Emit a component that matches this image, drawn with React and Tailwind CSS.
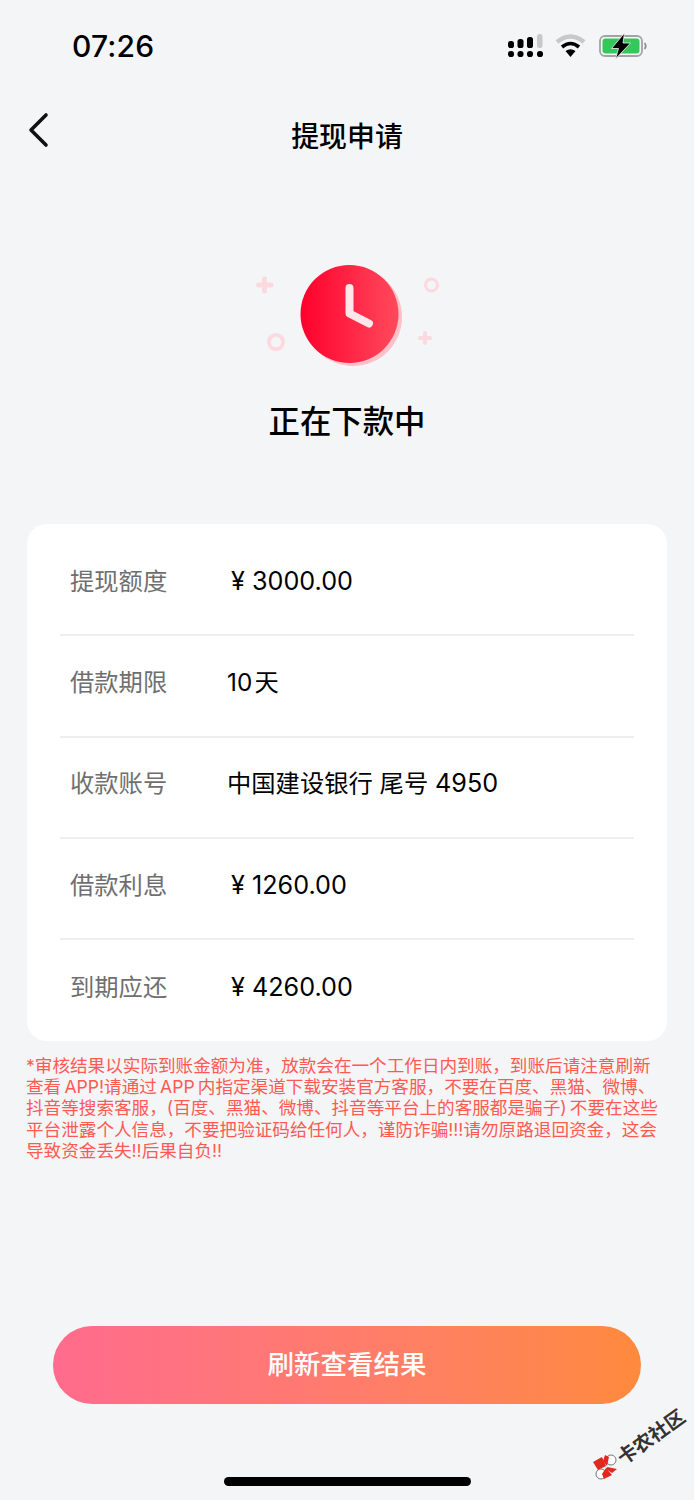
import React from "react";

const rows = [
  { label: "提现额度", value: "¥ 3000.00", money: true },
  { label: "借款期限", value: "10\u200a天" },
  { label: "收款账号", value: "中国建设银行 尾号 ", digits: "4950" },
  { label: "借款利息", value: "¥ 1260.00", money: true },
  { label: "到期应还", value: "¥ 4260.00", money: true },
];

const notice = [
  "*审核结果以实际到账金额为准，放款会在一个工作日内到账，到账后请注意刷新",
  "查看\u2009APP!请通过\u2009APP\u2009内指定渠道下载安装官方客服，不要在百度、黑猫、微博、",
  "抖音等搜索客服，(百度、黑猫、微博、抖音等平台上的客服都是骗子)\u2009不要在这些",
  "平台泄露个人信息，不要把验证码给任何人，谨防诈骗!!!请勿原路退回资金，这会",
  "导致资金丢失!!后果自负!!",
];

function StatusIcons() {
  return (
    <svg width="150" height="30" viewBox="505 31 150 30" className="block">
      {[508, 517.5, 527].map((x, i) => (
        <rect key={x} x={x} y={[41, 39, 37][i]} width="6" height={[7, 9, 11][i]} rx="2.6" fill="#000" />
      ))}
      <rect x="537" y="34" width="5.5" height="14" rx="2.5" fill="#c8c8c8" />
      {[508, 517.5, 527, 537].map((x) => (
        <rect key={x} x={x} y="51" width="6" height="6" rx="2.8" fill="#000" />
      ))}
      <path d="M557 42 Q570.5 31 584 42" fill="none" stroke="#c8c8c8" strokeWidth="4.5" />
      <path d="M562 47 Q570.5 40 579 47" fill="none" stroke="#000" strokeWidth="3.6" />
      <path d="M565.5 51 L570.5 57 L575.5 51 Q570.5 47.5 565.5 51 Z" fill="#000" />
      <rect x="600" y="36" width="42" height="20" rx="5" fill="none" stroke="#a3a3a3" strokeWidth="1.8" />
      <rect x="602.5" y="38.5" width="37" height="15" rx="3" fill="#34c759" />
      <path d="M644.5 43 Q647 46 644.5 49" fill="none" stroke="#8f8f8f" strokeWidth="1.8" />
      <path d="M624.5 33 L611.5 48.5 L618.5 48.5 L615.5 59 L630.5 43 L623 43 Z" fill="#000" stroke="#f4f5f7" strokeWidth="0.8" />
    </svg>
  );
}

function ClockArt() {
  return (
    <svg width="190" height="112" viewBox="252 260 190 112" className="block">
      <defs>
        <linearGradient id="clockFill" x1="0" y1="0" x2="1" y2="0">
          <stop offset="0" stopColor="#ff002d" />
          <stop offset="1" stopColor="#ff4a5c" />
        </linearGradient>
      </defs>
      <path d="M258.5 285 H271 M264.5 279 V291" stroke="#fcd9de" strokeWidth="5" strokeLinecap="round" />
      <path d="M420 338 H430 M425 333 V343" stroke="#fcd9de" strokeWidth="4" strokeLinecap="round" />
      <circle cx="276" cy="342" r="7.2" fill="none" stroke="#fcd9de" strokeWidth="3.8" />
      <circle cx="431.5" cy="285" r="6" fill="none" stroke="#fcd9de" strokeWidth="3" />
      <circle cx="353" cy="317" r="49" fill="#ffc0c8" />
      <circle cx="349.5" cy="314" r="49" fill="url(#clockFill)" />
      <path d="M349.5 288 V313.5 L369 323.5" fill="none" stroke="#ffe6ea" strokeWidth="8" strokeLinecap="round" strokeLinejoin="round" />
    </svg>
  );
}

function Logo() {
  return (
    <svg width="28" height="28" viewBox="0 0 28 28" className="block">
      <circle cx="9" cy="21" r="5" fill="#fff" stroke="#555" strokeWidth="0.8" />
      <circle cx="19" cy="7" r="5" fill="#fff" stroke="#555" strokeWidth="0.8" />
      <path d="M1 9 L10 4 L14 13 L6 17 Z" fill="#e0281e" />
      <path d="M13 2 L17 4 L15 13 L11 8 Z" fill="#e0281e" />
      <path d="M15 14 L25 16 L20 20 L14 16 Z" fill="#e0281e" />
      <path d="M14 15 L20 22 L12 26 L10 21 Z" fill="#e0281e" />
    </svg>
  );
}

export default function App() {
  return (
    <div className="relative h-[1500px] w-[694px] overflow-hidden bg-[#f4f5f7] font-['Inter','Noto_Sans_CJK_SC',sans-serif] text-black">
      <header className="flex h-[92px] items-start justify-between pl-[72px] pr-[39px] pt-[28px]">
        <span className="text-[30px] font-medium leading-[36px] tracking-[0.2px]">07:26</span>
        <div className="pt-[3px]"><StatusIcons /></div>
      </header>

      <nav className="grid h-[72px] grid-cols-[1fr_auto_1fr] items-start">
        <svg width="24" height="36" viewBox="0 0 24 36" className="ml-[27px] mt-[20px] block">
          <path d="M19 3 L4 18 L19 33" fill="none" stroke="#111" strokeWidth="3.6" strokeLinecap="round" strokeLinejoin="round" />
        </svg>
        <h1 className="pt-[27px] text-[27.9px] font-medium leading-[36px]">提现申请</h1>
        <span />
      </nav>

      <section className="flex flex-col items-center pt-[96px]">
        <ClockArt />
        <p className="mt-[28px] text-[31.4px] font-medium leading-[44px]">正在下款中</p>
      </section>

      <section className="mx-[27px] mt-[80px] h-[517px] w-[640px] rounded-[20px] bg-white px-[33px] pt-[11px]">
        {rows.map(({ label, value, money, digits }, i) => (
          <div key={label} className={`flex h-[101.3px] items-center pb-[8px] ${i < 4 ? "border-b-2 border-[#eeeff1]" : ""}`}>
            <span className="ml-[10px] w-[157px] text-[24.3px] leading-[32px] text-[#6f6f6f]">{label}</span>
            <span className={`whitespace-pre leading-[32px] ${money ? "pl-[4px] text-[25.2px]" : "text-[24.3px]"}`}>
              {value}
              {digits && <span className="text-[25.2px]">{digits}</span>}
            </span>
          </div>
        ))}
      </section>

      <div className="ml-[26px] mt-[14px] whitespace-nowrap text-[17.6px] leading-[21.2px] text-[#ff5a52]">
        {notice.map((line) => (
          <p key={line}>{line}</p>
        ))}
      </div>

      <button className="ml-[53px] mt-[165px] flex h-[78px] w-[588px] items-center justify-center rounded-full bg-gradient-to-r from-[#ff6b8d] to-[#ff8a3c] text-[26.5px] font-medium text-white">
        刷新查看结果
      </button>

      <div className="mx-auto mt-[73px] h-[9px] w-[247px] rounded-full bg-black" />

      <div className="absolute left-[592px] top-[1453px]"><Logo /></div>
      <span className="absolute left-[612px] top-[1423px] rotate-[-36deg] whitespace-nowrap text-[19.5px] font-bold leading-[28px] text-[#333]">卡农社区</span>
    </div>
  );
}
